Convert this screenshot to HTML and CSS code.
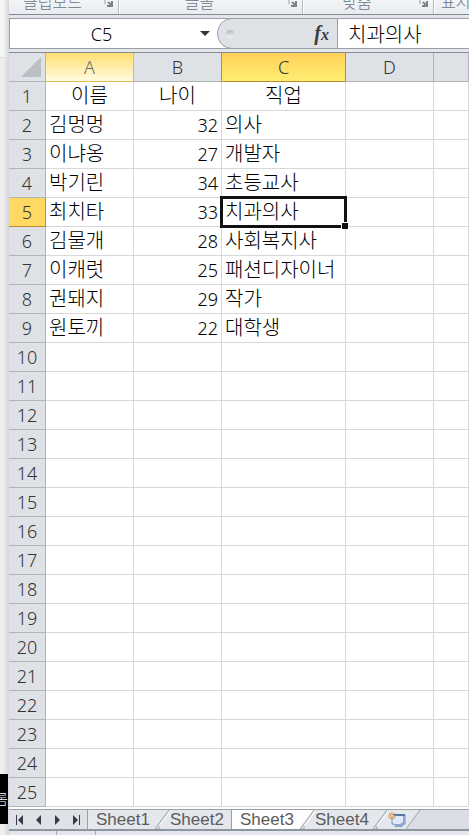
FILE: index.html
```
<!DOCTYPE html>
<html lang="ko">
<head>
    <meta charset="utf-8">
    <title>Sheet3</title>
    <link rel="stylesheet" href="styles.css">
</head>
<body>
<div class="desktop">
    <div class="behind">
        <div class="behind-top"></div>
        <div class="behind-black">롬</div>
    </div>

    <div class="window">
        <div class="ribbon">
            <div class="ribbon-group group-clipboard">
                <span>클립보드</span>
                <svg class="launcher" viewBox="0 0 9 9"><path d="M1 6V1h4" /><path class="launcher-arrow" d="M4 4l3 3M8 3v5H3" /></svg>
            </div>
            <div class="ribbon-group group-font">
                <span>글꼴</span>
                <svg class="launcher" viewBox="0 0 9 9"><path d="M1 6V1h4" /><path class="launcher-arrow" d="M4 4l3 3M8 3v5H3" /></svg>
            </div>
            <div class="ribbon-group group-align">
                <span>맞춤</span>
                <svg class="launcher" viewBox="0 0 9 9"><path d="M1 6V1h4" /><path class="launcher-arrow" d="M4 4l3 3M8 3v5H3" /></svg>
            </div>
            <div class="ribbon-group group-number"><span>표시</span></div>
        </div>

        <div class="formula-bar">
            <div class="name-box">
                <input class="name-input" type="text" value="C5" aria-label="이름 상자">
                <button class="name-arrow" aria-label="이름 목록">
                    <svg width="10" height="5" viewBox="0 0 10 5"><path d="M0 0h10L5 5z" fill="#333" /></svg>
                </button>
            </div>
            <div class="fx-area">
                <span class="fx-knob"></span>
                <button class="fx-button" aria-label="함수 삽입"><i>f</i><i class="fx-x">x</i></button>
            </div>
            <input class="formula-input" type="text" value="치과의사" aria-label="수식 입력줄">
        </div>

        <table class="sheet">
            <colgroup>
                <col class="col-head">
                <col class="col-normal">
                <col class="col-normal">
                <col class="col-wide">
                <col class="col-normal">
                <col>
            </colgroup>
            <thead>
            <tr>
                <th class="corner"><svg width="20" height="20" viewBox="0 0 20 20"><path d="M20 0v20H0z" fill="#b9bfc5" /></svg></th>
                <th class="hover">A</th>
                <th class="before-active">B</th>
                <th class="active">C</th>
                <th>D</th>
                <th></th>
            </tr>
            </thead>
            <tbody id="rows"></tbody>
        </table>

        <div class="tab-bar">
            <div class="tab-nav">
                <button aria-label="첫 시트"><svg width="8" height="10" viewBox="0 0 8 10"><path d="M0 0h1v10H0zM7 0v10L2 5z" /></svg></button>
                <button aria-label="이전 시트"><svg width="8" height="10" viewBox="0 0 8 10"><path d="M6 0v10L1 5z" /></svg></button>
                <button aria-label="다음 시트"><svg width="8" height="10" viewBox="0 0 8 10"><path d="M2 0v10l5-5z" /></svg></button>
                <button aria-label="마지막 시트"><svg width="8" height="10" viewBox="0 0 8 10"><path d="M1 0v10l5-5zM7 0h1v10H7z" /></svg></button>
            </div>
            <button class="tab tab-first">Sheet1</button>
            <svg class="slant" viewBox="0 0 15 19"><path class="slant-light" d="M2 19L15 2" /><path class="slant-dark" d="M0 19L14 0M1 19h3v-3" /></svg>
            <button class="tab tab-second">Sheet2</button>
            <button class="tab tab-active">Sheet3</button>
            <svg class="slant" viewBox="0 0 15 19"><path class="slant-fill" d="M0 0h14L0 19z" /><path class="slant-light" d="M2 19L15 2" /><path class="slant-dark" d="M0 19L14 0M1 19h3v-3" /></svg>
            <button class="tab tab-fourth">Sheet4</button>
            <svg class="slant" viewBox="0 0 15 19"><path class="slant-light" d="M2 19L15 2" /><path class="slant-dark" d="M0 19L14 0M1 19h3v-3" /></svg>
            <button class="tab tab-new" aria-label="워크시트 삽입">
                <svg width="18" height="16" viewBox="0 0 18 16">
                    <path d="M4 3h13v9l-2 1-2 2-3-1-2 1-2-3H4z" fill="#dfe8f8" stroke="#7d94c2" />
                    <path d="M6 2h11v2H6z" fill="#5872a4" />
                    <path d="M17 4v8l-2 1-2 2-3-1-2 1-2-3h6l3-2V4z" fill="#8ea6d2" />
                    <path d="M4 0v8M0 4h8M1 1l6 6M7 1L1 7" stroke="#d8882c" />
                    <circle cx="4" cy="4" r="1" fill="#fff3a0" />
                </svg>
            </button>
            <svg class="slant" viewBox="0 0 15 19"><path class="slant-rest" d="M15 0v19H0L14 0z" /><path class="slant-dark" d="M0 19L14 0" /></svg>
            <div class="tab-rest"></div>
        </div>
        <div class="status-bar">
            <span class="status-ready"></span>
            <span class="status-macro"></span>
        </div>
    </div>
</div>

<script>
    const totalRows = 25;
    const totalColumns = 5;
    const activeRow = 5;
    const activeColumn = 2;
    const data = [
        ["이름", "나이", "직업"],
        ["김멍멍", 32, "의사"],
        ["이냐옹", 27, "개발자"],
        ["박기린", 34, "초등교사"],
        ["최치타", 33, "치과의사"],
        ["김물개", 28, "사회복지사"],
        ["이캐럿", 25, "패션디자이너"],
        ["권돼지", 29, "작가"],
        ["원토끼", 22, "대학생"]
    ];

    let html = "";
    for (let row = 1; row <= totalRows; row++) {
        let headClass = row === activeRow ? " class='active'" : "";
        html += "<tr><th" + headClass + ">" + row + "</th>";
        for (let column = 0; column < totalColumns; column++) {
            let value = data[row - 1] ? data[row - 1][column] : "";
            if (value === undefined) {
                value = "";
            }
            let cellClass = "";
            if (row === 1) {
                cellClass = "title";
            } else if (typeof value === "number") {
                cellClass = "number";
            }
            if (row === activeRow && column === activeColumn) {
                cellClass = "selected";
                value += "<span class='selection'></span>";
            }
            html += "<td class='" + cellClass + "'>" + value + "</td>";
        }
        html += "</tr>";
    }
    document.getElementById("rows").innerHTML = html;
</script>
</body>
</html>
```
FILE: styles.css
```
* {
    box-sizing: border-box;
}

body {
    margin: 0;
    overflow: hidden;
    font-family: "Noto Sans", "Noto Sans CJK KR", sans-serif;
    font-size: 18px;
    font-weight: 300;
    color: #000000;
}

button, input {
    margin: 0;
    padding: 0;
    border: 0;
    background: none;
    font: inherit;
    color: inherit;
}

.desktop {
    display: flex;
    min-height: 100vh;
}

.behind {
    flex: 0 0 8px;
    min-width: 0;
    display: flex;
    flex-direction: column;
    background: linear-gradient(to right, #f0f0f0, #ececec 50%, #d8d8d8);
}

.behind-top {
    height: 58px;
    margin-bottom: 716px;
    border-bottom: 1px solid #dddddd;
    background: linear-gradient(to right, #f8f8f8, #f2f2f2 50%, #dddddd);
}

.behind-black {
    height: 50px;
    overflow: hidden;
    background-color: #000000;
    color: #ffffff;
    font-size: 14px;
    line-height: 50px;
    direction: rtl;
}

.window {
    flex: 1;
    min-width: 0;
    display: flex;
    flex-direction: column;
    border-left: 1px solid #d5d9de;
    background-color: #ffffff;
}

/* ribbon, only its lower edge is visible */
.ribbon {
    display: flex;
    height: 15px;
    overflow: hidden;
    border-bottom: 1px solid #868b91;
    background: linear-gradient(#f3f5f7, #e8ebef);
    color: #6a7482;
    font-size: 16px;
}

.ribbon-group {
    position: relative;
    display: flex;
    flex-shrink: 0;
    align-items: flex-end;
    justify-content: center;
    padding-right: 22px;
    border-right: 1px solid #b5bac1;
    box-shadow: 1px 0 0 #ffffff;
}

.ribbon-group span {
    line-height: 24px;
}

.group-clipboard {
    width: 110px;
}

.group-font {
    width: 184px;
}

.group-align {
    width: 131px;
}

.group-number {
    justify-content: flex-start;
    padding: 0 0 0 7px;
    border-right: 0;
}

.launcher {
    position: absolute;
    right: 5px;
    bottom: 7px;
    width: 9px;
    height: 9px;
    fill: none;
    stroke: #9aa0a8;
}

.launcher-arrow {
    stroke: #7b828a;
    stroke-width: 2;
}

.formula-bar {
    display: flex;
    height: 37px;
    padding: 3px 0;
    background-color: #e3e6ea;
}

.name-box {
    display: flex;
    flex: 0 0 224px;
    min-width: 0;
    padding-right: 16px;
    border: 1px solid #9a9fa6;
    border-right: 0;
    background-color: #ffffff;
}

.name-input {
    flex: 1;
    min-width: 0;
    text-align: center;
}

.name-arrow {
    display: flex;
    flex-shrink: 0;
    align-items: center;
    justify-content: center;
    width: 24px;
}

.fx-area {
    display: flex;
    flex: 0 0 121px;
    align-items: center;
    justify-content: space-between;
    margin-left: -16px;
    padding: 0 8px;
    border: 1px solid #9a9fa6;
    border-radius: 15px 0 0 15px;
    background-color: #dee1e6;
}

.fx-knob {
    width: 8px;
    height: 8px;
    border-radius: 4px;
    background: linear-gradient(#b5b9be, #f5f5f5);
}

.fx-button {
    font-family: "Liberation Serif", serif;
    font-size: 20px;
    font-weight: 700;
    line-height: 20px;
    color: #3c3c3c;
}

.fx-x {
    font-size: 16px;
}

.formula-input {
    flex: 1;
    min-width: 0;
    padding-left: 10px;
    border-top: 1px solid #9a9fa6;
    border-bottom: 1px solid #9a9fa6;
    background-color: #ffffff;
    font-size: 20px;
}

.sheet {
    width: 100%;
    table-layout: fixed;
    border-collapse: separate;
    border-spacing: 0;
    border-top: 1px solid #868b91;
}

.col-head {
    width: 37px;
}

.col-normal {
    width: 88px;
}

.col-wide {
    width: 124px;
}

.sheet th, .sheet td {
    height: 29px;
    padding: 0 3px;
    border-right: 1px solid #d8d8d8;
    border-bottom: 1px solid #d8d8d8;
    line-height: 28px;
    white-space: nowrap;
}

.sheet td {
    font-size: 20px;
}

.sheet th {
    padding: 0;
    border-color: #b1b5ba;
    background-color: #dee1e6;
    color: #333333;
    font-weight: 300;
    text-align: center;
}

.sheet .corner {
    padding: 4px 4px 4px 0;
    text-align: right;
    line-height: 0;
}

.sheet th.hover {
    border-color: #e3bc4f;
    background: linear-gradient(#ffdf70, #fffbe0);
    color: #666666;
}

.sheet th.before-active {
    border-right-color: #c28a30;
}

.sheet thead th.active {
    border-color: #c28a30;
    background: linear-gradient(#ffd058, #ffee73);
}

.sheet tbody th.active {
    border-color: #c28a30;
    background-color: #ffd961;
}

.sheet td.title {
    text-align: center;
}

.sheet td.number {
    font-size: 18px;
    text-align: right;
}

.sheet td.selected {
    position: relative;
}

.selection {
    position: absolute;
    inset: -2px;
    border: 3px solid #111111;
}

.selection::after {
    content: "";
    position: absolute;
    right: -4px;
    bottom: -4px;
    width: 6px;
    height: 6px;
    border-top: 1px solid #ffffff;
    border-left: 1px solid #ffffff;
    background-color: #111111;
}

.tab-bar {
    display: flex;
    height: 22px;
    margin-top: 2px;
    border-top: 1px solid #9a9fa6;
    border-bottom: 2px solid #8d959f;
    background-color: #e4e7eb;
}

.tab-nav {
    display: flex;
    flex: 0 0 79px;
    align-items: center;
    justify-content: space-around;
    padding: 0 2px;
    border-right: 1px solid #9a9fa6;
    background-color: #dee1e6;
}

.tab-nav button {
    display: flex;
    fill: #333b48;
}

.tab {
    flex-shrink: 0;
    font-family: "Liberation Sans", sans-serif;
    font-size: 17px;
    line-height: 19px;
    color: #5c5c5c;
    text-align: left;
    white-space: nowrap;
}

.tab-first {
    width: 67px;
    padding-left: 8px;
}

.tab-second {
    width: 62px;
    border-right: 1px solid #9a9fa6;
}

.tab-active {
    width: 68px;
    padding-left: 8px;
    background-color: #ffffff;
}

.tab-fourth {
    width: 58px;
}

.tab-new {
    display: flex;
    align-items: center;
    width: 18px;
}

.slant {
    flex: 0 0 15px;
    height: 19px;
    fill: none;
}

.slant-dark {
    stroke: #9a9fa6;
}

.slant-light {
    stroke: #ffffff;
}

.slant-fill {
    fill: #ffffff;
}

.slant-rest {
    fill: #dadde4;
}

.tab-rest {
    flex: 1;
    background-color: #dadde4;
}

.status-bar {
    display: flex;
    flex: 1;
    min-height: 4px;
    background-color: #e3e6ea;
}

.status-ready {
    width: 48px;
    border-right: 1px solid #a5abb3;
}

.status-macro {
    width: 39px;
    border-right: 1px solid #a5abb3;
}
```
